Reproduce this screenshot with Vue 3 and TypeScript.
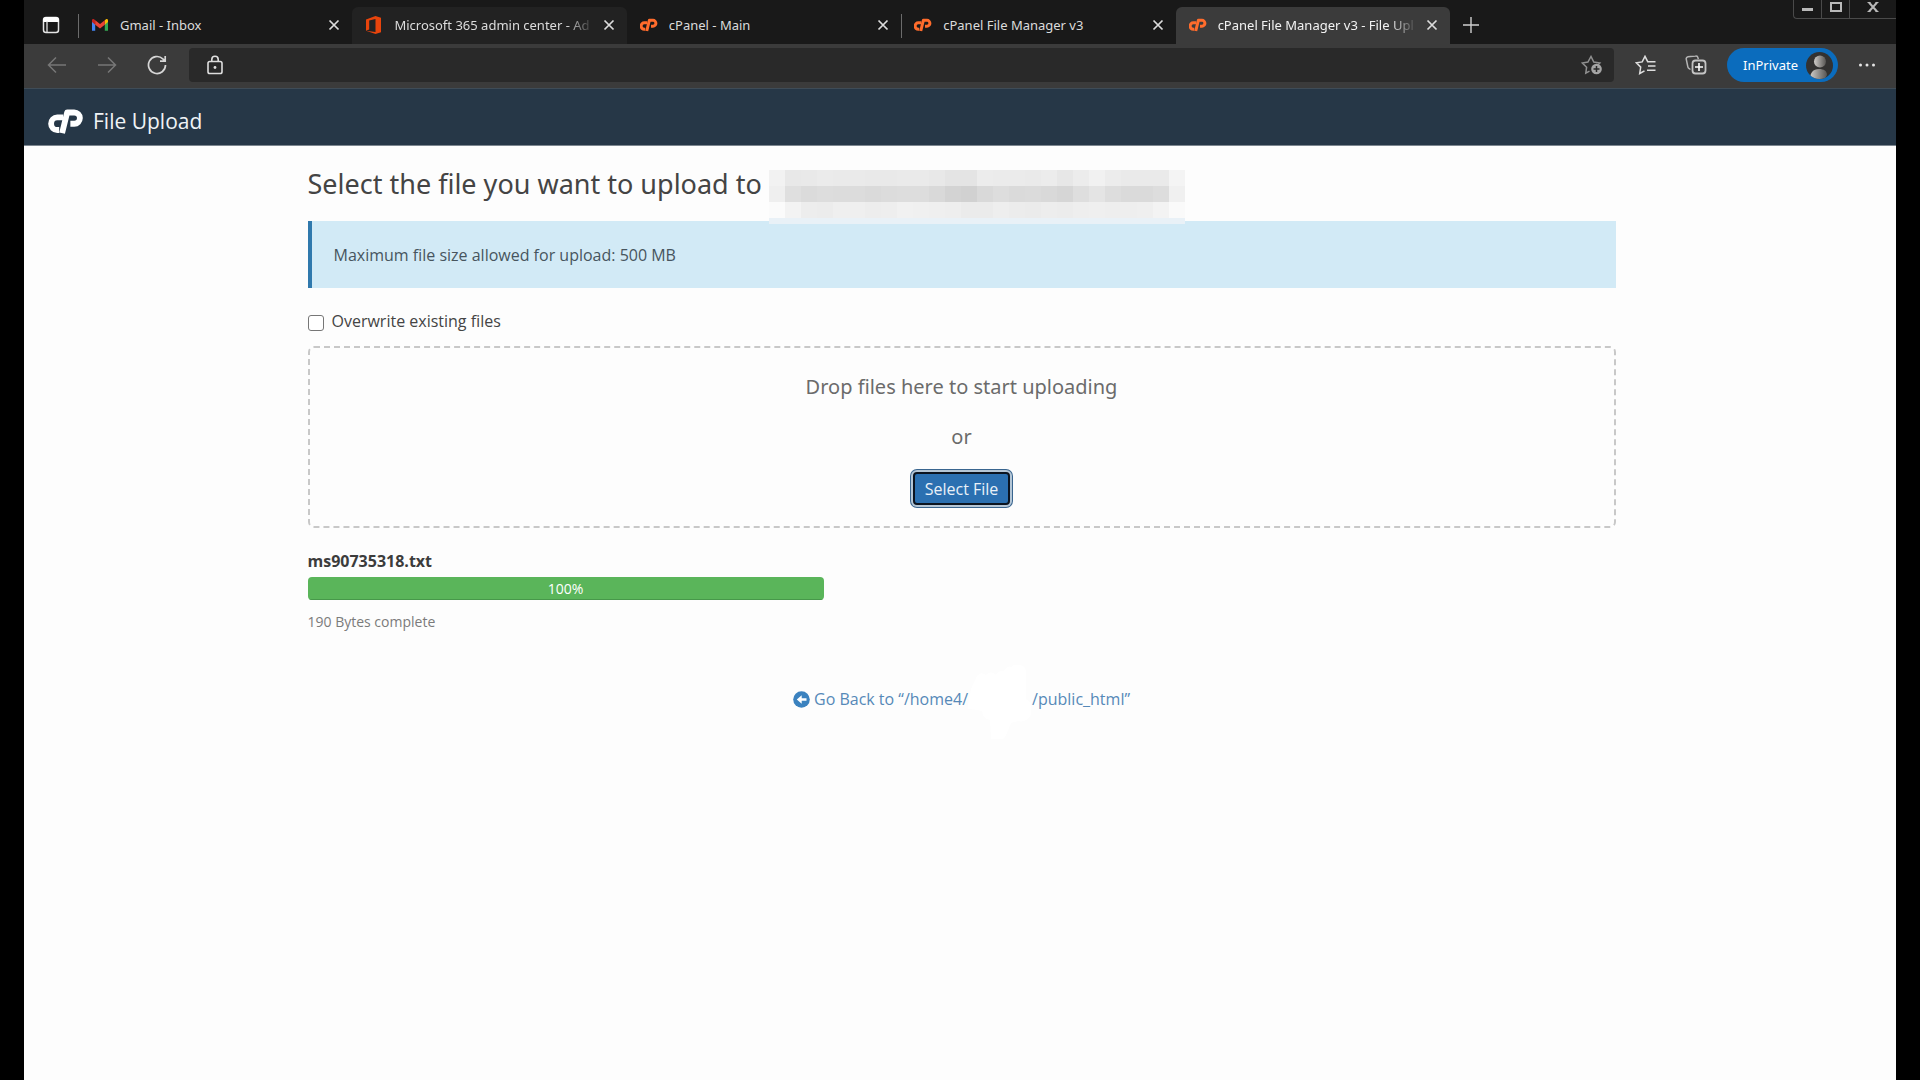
<script setup lang="ts">
import { ref } from 'vue'

interface Tab {
  id: number
  title: string
  icon: 'gmail' | 'office' | 'cpanel'
  state: 'idle' | 'hover' | 'active'
  divider: boolean
  fade: boolean
}

const tabs: Tab[] = [
  { id: 1, title: 'Gmail - Inbox', icon: 'gmail', state: 'idle', divider: true, fade: false },
  { id: 2, title: 'Microsoft 365 admin center - Ad', icon: 'office', state: 'hover', divider: false, fade: true },
  { id: 3, title: 'cPanel - Main', icon: 'cpanel', state: 'idle', divider: false, fade: false },
  { id: 4, title: 'cPanel File Manager v3', icon: 'cpanel', state: 'idle', divider: true, fade: false },
  { id: 5, title: 'cPanel File Manager v3 - File Upl', icon: 'cpanel', state: 'active', divider: false, fade: true },
]

const address = ref('')
const overwrite = ref(false)
const progress = ref(100)

// Grey levels of the pixelated path, one list per row
const mosaic: number[][] = [
  [242, 232, 233, 235, 234, 234, 233, 233, 234, 234, 232, 228, 228, 236, 235, 235, 234, 236, 231, 236, 241, 236, 234, 234, 234, 244],
  [239, 223, 219, 221, 220, 220, 218, 220, 221, 221, 217, 211, 209, 217, 221, 218, 219, 217, 214, 222, 228, 221, 218, 218, 221, 240],
  [251, 243, 237, 236, 239, 239, 237, 238, 241, 240, 239, 238, 235, 235, 238, 236, 235, 237, 236, 238, 239, 238, 238, 239, 243, 250],
]
</script>

<template>
  <div class="screen">
    <div class="window">
      <div class="tab-strip">
        <button class="tab-actions" aria-label="Tab actions">
          <svg width="18" height="18" viewBox="0 0 18 18">
            <rect x="1.5" y="1.5" width="15" height="15" rx="2.5" fill="none" stroke="#e4e4e4" stroke-width="1.5" />
            <path d="M1.5 5.5V4a2.5 2.5 0 0 1 2.5-2.5h10A2.500 2.500 0 0 1 16.500 4v1.500z" fill="#fff" stroke="#fff" />
            <path d="M5 5v11.500" stroke="#e4e4e4" stroke-width="1.300" />
          </svg>
        </button>
        <div class="tabs" role="tablist">
          <div
            v-for="tab in tabs"
            :key="tab.id"
            class="tab"
            :class="[tab.state, { divider: tab.divider }]"
            role="tab"
            :aria-selected="tab.state === 'active'"
          >
            <svg v-if="tab.icon === 'gmail'" class="favicon" viewBox="0 0 18 18">
              <path d="M1 4.500v10.200h3.200V7.500z" fill="#4285f4" />
              <path d="M17 4.500v10.200h-3.200V7.500z" fill="#34a853" />
              <path d="M13.800 4.200 15 3.300c1-.7 2 0 2 1.100v1.700l-3.200 2.700z" fill="#fbbc04" />
              <path d="M4.200 4.200 3 3.300c-1-.7-2 0-2 1.100v1.700l3.200 2.700z" fill="#c5221f" />
              <path d="M4.200 4.200 9 8l4.800-3.800v4.500L9 12.400 4.200 8.700z" fill="#ea4335" />
            </svg>
            <svg v-else-if="tab.icon === 'office'" class="favicon" viewBox="0 0 18 18">
              <path d="M10.500 0 16 1.700v14.600L10.500 18 1 14.700l9.500 1.200V3L4.200 4.600v8.800L1 14.700V3.500z" fill="#e8440c" />
            </svg>
            <svg v-else class="favicon" viewBox="1 0 36 25">
              <g fill="none" stroke="#ff6c2c" stroke-width="6" stroke-linejoin="round">
                <path d="M15.500 8.200H9.500a6.300 6.500 0 0 0 0 13h2" />
                <path d="M14.500 24.500 19.700 3.200H27a5.800 5.800 0 0 1 0 11.600h-4" />
              </g>
            </svg>
            <span class="tab-title" :class="{ fade: tab.fade }">{{ tab.title }}</span>
            <button class="tab-close" :aria-label="`Close ${tab.title}`">
              <svg width="12" height="12" viewBox="0 0 12 12"><path d="M1.500 1.500l9 9M10.500 1.500l-9 9" stroke="#dcdcdc" stroke-width="1.700" /></svg>
            </button>
          </div>
        </div>
        <button class="new-tab" aria-label="New tab">
          <svg width="16" height="16" viewBox="0 0 16 16"><path d="M8 0v16M0 8h16" stroke="#cfcfcf" stroke-width="1.400" /></svg>
        </button>
        <div class="window-controls">
          <button aria-label="Minimize">
            <svg width="12" height="12" viewBox="0 0 12 12"><path d="M0 8.500h11" stroke="#b9b9b9" stroke-width="3" /></svg>
          </button>
          <button aria-label="Maximize">
            <svg width="12" height="12" viewBox="0 0 12 12"><rect x="1" y="2" width="10" height="8" fill="none" stroke="#b9b9b9" stroke-width="2" /></svg>
          </button>
          <button class="wide" aria-label="Close window">
            <svg width="12" height="12" viewBox="0 0 12 12"><path d="M2 1.500l8 9M10 1.500l-8 9" stroke="#b9b9b9" stroke-width="2" /><path d="M.5 1.500h3M8.500 1.500h3M.5 10.500h3M8.500 10.500h3" stroke="#b9b9b9" /></svg>
          </button>
        </div>
      </div>

      <div class="toolbar">
        <div class="nav">
          <button aria-label="Back">
            <svg width="20" height="18" viewBox="0 0 20 18"><path d="M19 9H1.500M9 1.500 1.500 9 9 16.500" fill="none" stroke="#777" stroke-width="1.500" /></svg>
          </button>
          <button aria-label="Forward">
            <svg width="20" height="18" viewBox="0 0 20 18"><path d="M1 9h17.500M11 1.500 18.500 9 11 16.500" fill="none" stroke="#777" stroke-width="1.500" /></svg>
          </button>
          <button aria-label="Refresh">
            <svg width="20" height="20" viewBox="0 0 20 20"><path d="M18.500 10A8.500 8.500 0 1 1 15.800 3.800L18 6M18.200 1v5.200H13" fill="none" stroke="#d6d6d6" stroke-width="1.700" /></svg>
          </button>
        </div>
        <div class="address">
          <svg width="16" height="20" viewBox="0 0 16 20">
            <rect x="1" y="6.500" width="14" height="12" rx="1.800" fill="none" stroke="#dedede" stroke-width="1.600" />
            <path d="M4.800 6.500V4.500a3.200 3.200 0 0 1 6.400 0v2" fill="none" stroke="#dedede" stroke-width="1.600" />
            <circle cx="8" cy="12.500" r="1.400" fill="#dedede" />
          </svg>
          <input v-model="address" type="text" aria-label="Address bar" />
          <button aria-label="Add to favorites">
            <svg width="22" height="20" viewBox="0 0 22 20">
              <path d="M8.500 16.200 4.800 18.200l.8-6L1.300 8l5.600-.9L10 1.500l2.800 5.600 6 .9-2 2" fill="none" stroke="#909090" stroke-width="1.500" />
              <circle cx="15.500" cy="14" r="5.300" fill="#a5a5a5" />
              <path d="M15.500 11v6M12.500 14h6" stroke="#292929" stroke-width="1.500" />
            </svg>
          </button>
        </div>
        <button class="tool" aria-label="Favorites">
          <svg width="22" height="20" viewBox="0 0 22 20">
            <path d="M9.500 15.800 4.700 18.500l1-6.400L1.400 7.800l5.800-.9L10 1.300l2.700 5.400h7.800M13 11h7.500M12 15.300h8.500" fill="none" stroke="#dedede" stroke-width="1.500" />
          </svg>
        </button>
        <button class="tool" aria-label="Collections">
          <svg width="22" height="20" viewBox="0 0 22 20">
            <path d="M5.500 14.500 3.800 13.300a2.500 2.500 0 0 1-1-1.700L1.300 4.300C1 3 1.700 2 3 1.700L10.500 1c1.400-.2 2.300.5 2.500 1.800l.3 1.400" fill="none" stroke="#b5b5b5" stroke-width="1.500" />
            <rect x="7.500" y="5.500" width="13" height="13" rx="3" fill="none" stroke="#c4c4c4" stroke-width="1.800" />
            <path d="M14 8v8M10 12h8" stroke="#fff" stroke-width="1.600" />
          </svg>
        </button>
        <button class="profile">
          InPrivate
          <svg width="27" height="27" viewBox="0 0 27 27">
            <defs>
              <linearGradient id="person"><stop offset="0" stop-color="#d0cdc9" /><stop offset="1" stop-color="#575553" /></linearGradient>
              <clipPath id="disc"><circle cx="13.500" cy="13.500" r="13.500" /></clipPath>
            </defs>
            <g clip-path="url(#disc)">
              <rect width="27" height="27" fill="#333231" />
              <circle cx="14" cy="9.500" r="6" fill="url(#person)" />
              <path d="M4 27c0-6 3-10 9-10 5 0 8 2 8 6l-2 4z" fill="url(#person)" />
            </g>
          </svg>
        </button>
        <button class="more" aria-label="Settings and more">
          <svg width="18" height="4" viewBox="0 0 18 4"><g fill="#e4e4e4"><circle cx="2.500" cy="2" r="1.500" /><circle cx="9" cy="2" r="1.500" /><circle cx="15.500" cy="2" r="1.500" /></g></svg>
        </button>
      </div>

      <header class="app-header">
        <svg width="35" height="25" viewBox="0 0 36 25">
          <g fill="none" stroke="#fff" stroke-width="6" stroke-linejoin="round">
            <path d="M15.500 8.200H9.500a6.300 6.500 0 0 0 0 13h2" />
            <path d="M14.500 24.500 19.700 3.200H27a5.800 5.800 0 0 1 0 11.600h-4" />
          </g>
        </svg>
        <span>File Upload</span>
      </header>

      <main class="page">
        <h1>
          <span>Select the file you want to upload to</span>
          <span class="mosaic" aria-hidden="true">
            <span v-for="(row, r) in mosaic" :key="r" class="mosaic-row">
              <i v-for="(level, c) in row" :key="c" :style="{ background: `rgb(${level}, ${level}, ${level})` }"></i>
            </span>
            <span class="mosaic-edge"></span>
          </span>
        </h1>

        <div class="callout">Maximum file size allowed for upload: 500 MB</div>

        <div class="overwrite">
          <input id="overwrite" v-model="overwrite" type="checkbox" />
          <label for="overwrite">Overwrite existing files</label>
        </div>

        <section class="drop-zone">
          <p>Drop files here to start uploading</p>
          <p>or</p>
          <button class="select-file">Select File</button>
        </section>

        <section class="upload">
          <strong>ms90735318.txt</strong>
          <div class="bar" role="progressbar" :aria-valuenow="progress" aria-valuemin="0" aria-valuemax="100">
            <div class="fill" :style="{ width: `${progress}%` }">{{ progress }}%</div>
          </div>
          <small>190 Bytes complete</small>
        </section>

        <div class="back">
          <a href="#">
            <svg width="17" height="17" viewBox="0 0 17 17">
              <circle cx="8.500" cy="8.500" r="8.300" fill="#3b82bf" />
              <path d="M13.500 7.300H8.700V4.300L3.800 8.500l4.900 4.200v-3h4.800z" fill="#fff" />
            </svg>
            <span>Go Back to “/home4/</span>
            <svg class="smudge" width="64" height="74" viewBox="0 0 64 74">
              <path d="M0 40 3 24 9 11q4-5 9-1 5-5 10 0 3-5 8-4 3-6 8-4 2-4 7-2 6 0 7 6v28l5 4v12q-5 8-13 6l-7 2-4 10q-3 8-8 7-6 3-8-2l-1-18q-7-1-8-9-8-2-14-2z" fill="#fff" />
            </svg>
            <span>/public_html”</span>
          </a>
        </div>
      </main>
    </div>
  </div>
</template>

<style>
body {
  background: #000;
}
</style>

<style scoped>
* {
  box-sizing: border-box;
}

button {
  display: flex;
  align-items: center;
  justify-content: center;
  padding: 0;
  border: 0;
  background: none;
  font: inherit;
  color: inherit;
}

svg {
  display: block;
  flex: none;
}

.screen {
  min-height: 100vh;
  padding: 0 24px;
  display: flex;
  background: #000;
  font-family: "Open Sans", "Noto Sans", sans-serif;
  font-size: 16px;
}

.window {
  flex: 1;
  min-width: 0;
  display: flex;
  flex-direction: column;
  background: #fdfdfd;
}

.tab-strip {
  display: flex;
  height: 44px;
  background: #191919;
  color: #dcdcdc;
  font-family: "Noto Sans", sans-serif;
  font-size: 13px;
}

.tab-actions {
  width: 54px;
  height: 36px;
  margin-top: 7px;
}

.tabs {
  display: flex;
  flex: 0 1 1372px;
  min-width: 0;
  padding-top: 7px;
}

.tab {
  position: relative;
  display: flex;
  flex: 1 1 0;
  min-width: 0;
  align-items: center;
  gap: 11px;
  padding: 0 8px 2px 13px;
  border-radius: 6px 6px 0 0;
}

.tab.hover {
  background: #222;
}

.tab.active {
  background: #3b3b3b;
  color: #f2f2f2;
}

.tab.divider::before {
  content: "";
  position: absolute;
  left: 0;
  top: 7px;
  width: 1px;
  height: 24px;
  background: #6b6b6b;
}

.favicon {
  width: 18px;
  height: 18px;
}

.tab-title {
  flex: 1;
  min-width: 0;
  overflow: hidden;
  white-space: nowrap;
}

.tab-title.fade {
  mask-image: linear-gradient(to right, #000 calc(100% - 28px), transparent);
}

.tab-close {
  width: 20px;
  height: 24px;
  margin-left: -6px;
}

.new-tab {
  width: 42px;
  height: 36px;
  margin-top: 7px;
}

.window-controls {
  display: flex;
  height: 19px;
  margin-left: auto;
  border: 1px solid #4a4a4a;
  border-width: 0 0 1px 1px;
  border-radius: 0 0 0 4px;
}

.window-controls button {
  width: 28px;
  border-right: 1px solid #4a4a4a;
  padding-bottom: 4px;
}

.window-controls .wide {
  width: 46px;
  border-right: 0;
}

.toolbar {
  display: flex;
  align-items: flex-start;
  height: 45px;
  padding: 4px 0 0 8px;
  border-bottom: 1px solid #3f4c57;
  background: #3b3b3b;
  color: #fff;
}

.nav {
  display: flex;
  width: 157px;
}

.nav button {
  width: 50px;
  height: 34px;
}

.address {
  display: flex;
  flex: 1;
  align-items: center;
  height: 34px;
  min-width: 0;
  margin-right: 7px;
  padding: 0 11px 0 18px;
  border-radius: 4px;
  background: #292929;
}

.address input {
  flex: 1;
  min-width: 0;
  border: 0;
  outline: 0;
  background: transparent;
  color: #fff;
  font: inherit;
}

.tool {
  width: 50px;
  height: 34px;
}

.profile {
  gap: 8px;
  height: 34px;
  margin-left: 6px;
  padding: 0 5px 0 16px;
  border-radius: 17px;
  background: #0b6cbd;
  font-family: "Noto Sans", sans-serif;
  font-size: 13px;
}

.more {
  width: 58px;
  height: 34px;
}

.app-header {
  display: flex;
  align-items: center;
  gap: 10px;
  height: 57px;
  padding: 8px 24px 0;
  border-bottom: 1px solid #7d8790;
  background: #263747;
  color: #f0f3f6;
  font-size: 21px;
  line-height: 30px;
}

.page {
  width: calc(100% - 561px);
  min-width: 600px;
  margin: 0 auto;
  padding-left: 3px;
  color: #444;
  font-size: 16px;
  line-height: 24px;
}

h1 {
  position: relative;
  display: flex;
  margin: 18px 0 17px;
  color: #444;
  font-family: "Noto Sans", sans-serif;
  font-size: 27px;
  font-weight: 400;
  line-height: 40px;
}

.mosaic {
  position: absolute;
  left: 461px;
  top: 6px;
  display: flex;
  flex-direction: column;
}

.mosaic-row {
  display: flex;
}

.mosaic-row i {
  width: 16px;
  height: 16px;
}

.mosaic-edge {
  height: 6px;
  background: #e9f1f7;
}

.callout {
  padding: 22px 22px 21px;
  border-left: 4px solid #3079ad;
  background: #d2eaf6;
  color: #47555e;
}

.overwrite {
  display: flex;
  align-items: center;
  gap: 8px;
  margin: 21px 0 13px;
}

.overwrite input {
  appearance: none;
  width: 16px;
  height: 16px;
  margin: 3px 0 0;
  border: 1px solid #767676;
  border-radius: 3px;
  background: #fff;
}

.drop-zone {
  display: flex;
  flex-direction: column;
  align-items: center;
  padding: 24px 0 18px;
  border: 2px dashed #c8c8c8;
  border-radius: 6px;
  color: #6b6b6b;
  font-family: "Noto Sans", sans-serif;
  font-size: 20px;
  line-height: 30px;
}

.drop-zone p {
  margin: 0 0 20px;
}

.drop-zone p + p {
  margin-bottom: 17px;
}

.select-file {
  height: 33px;
  margin: 3px;
  padding: 0 10px;
  border: 2px solid #0b1420;
  border-radius: 4px;
  background: #2b70b1;
  box-shadow: 0 0 0 2px #b4c6d6, 0 0 0 3px #39658f;
  color: #e9f1f8;
  font-family: "Open Sans", sans-serif;
  font-size: 16px;
}

.upload {
  display: flex;
  flex-direction: column;
  width: 516px;
  max-width: 100%;
  margin-top: 21px;
}

.upload strong {
  color: #3c3c3c;
}

.bar {
  height: 23px;
  margin: 4px 0 10px;
  border-radius: 4px;
  overflow: hidden;
  background: #eee;
}

.fill {
  height: 100%;
  border-bottom: 1px solid #47984a;
  background: #5ab55a;
  color: #fff;
  font-size: 14px;
  line-height: 24px;
  text-align: center;
}

.upload small {
  color: #7b7b7b;
  font-size: 14px;
}

.back {
  display: flex;
  justify-content: center;
  margin-top: 53px;
}

.back a {
  position: relative;
  display: flex;
  align-items: center;
  gap: 4px;
  color: #5689b8;
  text-decoration: none;
}

.smudge {
  margin: -22px -4px -28px;
}
</style>
